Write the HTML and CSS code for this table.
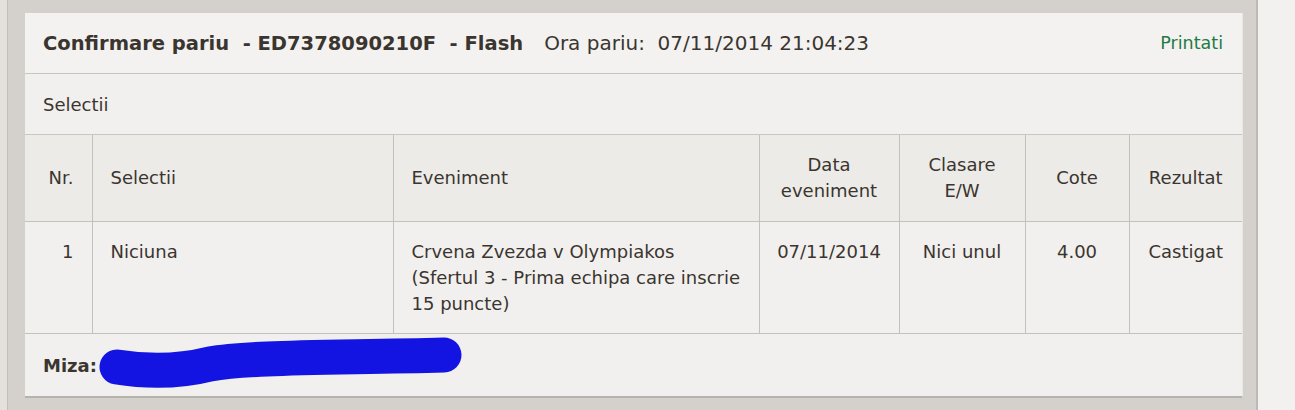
FILE: index.html
```html
<!DOCTYPE html>
<html lang="ro">
<head>
<meta charset="utf-8">
<title>Confirmare pariu</title>
<link rel="stylesheet" href="styles.css">
</head>
<body>
<div class="page">
  <div class="stripe"></div>
  <main class="main">
    <section class="panel">
      <header class="panel-head">
        <div class="title">
          <span class="title-main">Confirmare pariu&nbsp; - ED7378090210F&nbsp; - Flash</span>
          <span class="title-time">Ora pariu:&nbsp; 07/11/2014 21:04:23</span>
        </div>
        <a class="print" href="#">Printati</a>
      </header>
      <div class="section-label">Selectii</div>
      <table class="bets">
        <colgroup>
          <col class="c-nr"><col class="c-sel"><col class="c-ev"><col class="c-data"><col class="c-cls"><col class="c-cote"><col class="c-rez">
        </colgroup>
        <thead>
          <tr>
            <th class="right">Nr.</th>
            <th class="left">Selectii</th>
            <th class="left">Eveniment</th>
            <th>Data<br>eveniment</th>
            <th>Clasare<br>E/W</th>
            <th>Cote</th>
            <th>Rezultat</th>
          </tr>
        </thead>
        <tbody>
          <tr>
            <td class="right">1</td>
            <td class="left">Niciuna</td>
            <td class="left ev">Crvena Zvezda v Olympiakos (Sfertul 3 - Prima echipa care inscrie 15 puncte)</td>
            <td>07/11/2014</td>
            <td>Nici unul</td>
            <td>4.00</td>
            <td>Castigat</td>
          </tr>
        </tbody>
      </table>
      <div class="stake">
        <span class="stake-label">Miza:</span>
        <svg class="scribble" width="372" height="54" viewBox="0 0 372 54" aria-hidden="true">
          <path d="M19 31 C 50 36, 80 36, 112 28 C 150 21, 230 22, 346 19" fill="none" stroke="#1414e2" stroke-width="35" stroke-linecap="round" stroke-linejoin="round"/>
        </svg>
      </div>
    </section>
  </main>
  <div class="side"></div>
</div>
</body>
</html>
```

FILE: styles.css
```css
html, body {
  margin: 0;
  padding: 0;
}
body {
  background: #d4d0cb;
  font-family: "DejaVu Sans", Verdana, sans-serif;
  color: #3b352f;
}
.page {
  display: flex;
  height: 410px;
  overflow: hidden;
}
.stripe {
  width: 7px;
  flex: none;
  background: #e4e1dd;
  border-right: 1px solid #c2beb9;
}
.main {
  flex: 1;
  padding: 13px 14px 0 17px;
}
.side {
  width: 37px;
  flex: none;
  background: #f2f1ef;
  border-left: 2px solid #bdb9b4;
}
.panel {
  background: #f1f0ee;
  box-shadow: 0 2px 0 #b6b2ad, 1px 0 0 #e9e7e4;
  height: 383px;
  display: flex;
  flex-direction: column;
}
.panel-head {
  height: 60px;
  display: flex;
  align-items: center;
  justify-content: space-between;
  padding: 0 19px 0 18px;
  border-bottom: 1px solid #c9c6c2;
  background: #f3f2f0;
}
.title {
  display: flex;
  align-items: baseline;
  white-space: nowrap;
}
.title-main {
  font-weight: bold;
  font-size: 19.5px;
}
.title-time {
  font-size: 20px;
  margin-left: 21px;
}
.print {
  font-size: 17.5px;
  color: #1f7a45;
  text-decoration: none;
}
.section-label {
  height: 60px;
  display: flex;
  align-items: center;
  padding-left: 18px;
  font-size: 18px;
  border-bottom: 1px solid #c9c6c2;
}
.bets {
  width: 100%;
  table-layout: fixed;
  border-collapse: collapse;
  font-size: 18px;
  line-height: 26px;
}
.c-nr { width: 67px; }
.c-sel { width: 301px; }
.c-ev { width: 366px; }
.c-data { width: 140px; }
.c-cls { width: 126px; }
.c-cote { width: 104px; }
.c-rez { width: 113px; }
.bets th, .bets td {
  border: 1px solid #c4c0bb;
  text-align: center;
  padding: 0 16px;
}
.bets tr > :first-child { border-left: none; }
.bets tr > :last-child { border-right: none; }
.bets thead tr > * { border-top: none; }
.bets th {
  font-weight: normal;
  background: #ecebe8;
  height: 86px;
  padding-top: 0;
  padding-bottom: 0;
  vertical-align: middle;
}
.bets td {
  vertical-align: top;
  padding-top: 17px;
  padding-bottom: 16px;
  height: 78px;
}
.bets .left { text-align: left; padding-left: 18px; padding-right: 12px; }
.bets .right { text-align: right; padding-right: 18px; padding-left: 6px; }
.stake {
  flex: 1;
  display: flex;
  align-items: center;
  padding-left: 18px;
}
.stake-label {
  font-weight: bold;
  font-size: 18px;
}
.scribble {
  display: block;
  margin-left: 1px;
  margin-top: -4px;
}
```
